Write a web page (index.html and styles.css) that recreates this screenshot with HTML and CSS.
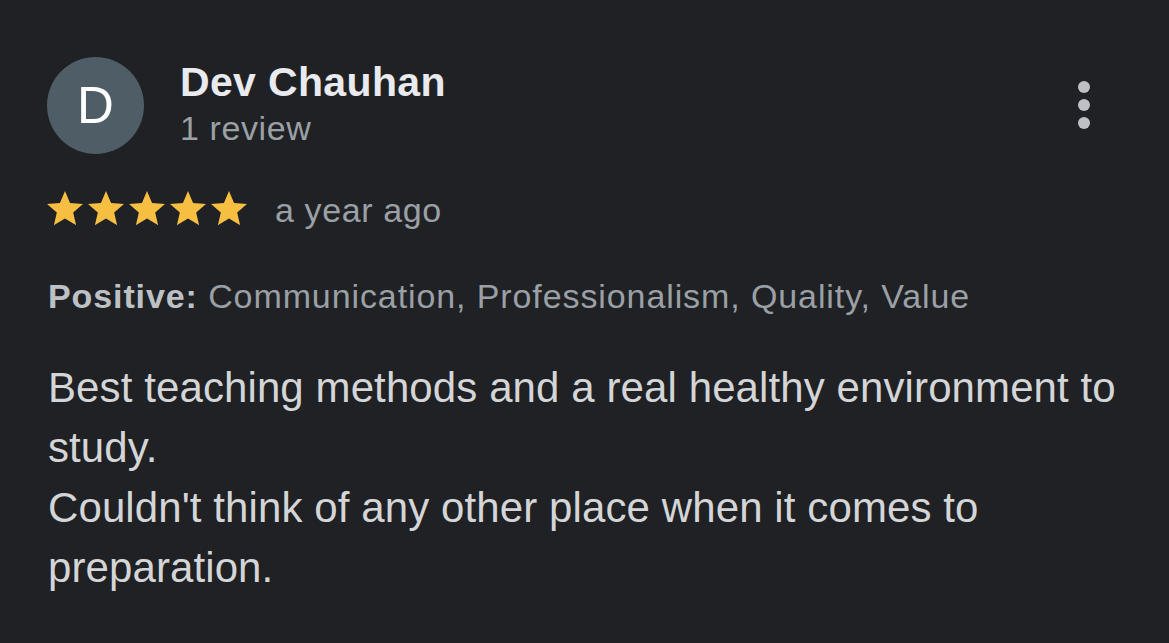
FILE: index.html
```html
<!DOCTYPE html>
<html>
<head>
<meta charset="utf-8">
<link rel="stylesheet" href="styles.css">
</head>
<body>
<div class="review">
  <div class="header">
    <div class="avatar">D</div>
    <div class="who">
      <div class="name">Dev Chauhan</div>
      <div class="count">1 review</div>
    </div>
    <div class="menu" aria-label="More">
      <span class="dot"></span><span class="dot"></span><span class="dot"></span>
    </div>
  </div>
  <div class="rating">
    <div class="stars">
      <svg class="star" viewBox="2 2 20 19"><path d="M12 17.27L18.18 21l-1.64-7.03L22 9.24l-7.19-.61L12 2 9.19 8.63 2 9.24l5.46 4.73L5.82 21z"/></svg>
      <svg class="star" viewBox="2 2 20 19"><path d="M12 17.27L18.18 21l-1.64-7.03L22 9.24l-7.19-.61L12 2 9.19 8.63 2 9.24l5.46 4.73L5.82 21z"/></svg>
      <svg class="star" viewBox="2 2 20 19"><path d="M12 17.27L18.18 21l-1.64-7.03L22 9.24l-7.19-.61L12 2 9.19 8.63 2 9.24l5.46 4.73L5.82 21z"/></svg>
      <svg class="star" viewBox="2 2 20 19"><path d="M12 17.27L18.18 21l-1.64-7.03L22 9.24l-7.19-.61L12 2 9.19 8.63 2 9.24l5.46 4.73L5.82 21z"/></svg>
      <svg class="star" viewBox="2 2 20 19"><path d="M12 17.27L18.18 21l-1.64-7.03L22 9.24l-7.19-.61L12 2 9.19 8.63 2 9.24l5.46 4.73L5.82 21z"/></svg>
    </div>
    <span class="when">a year ago</span>
  </div>
  <p class="tags"><b>Positive:</b> Communication, Professionalism, Quality, Value</p>
  <p class="text">Best teaching methods and a real healthy environment to study.<br>Couldn't think of any other place when it comes to preparation.</p>
</div>
</body>
</html>
```
FILE: styles.css
```css
html, body {
  margin: 0;
  padding: 0;
  background: #202124;
}
body {
  font-family: "Liberation Sans", Arial, sans-serif;
  width: 1169px;
  height: 643px;
  overflow: hidden;
}
.review {
  padding: 57px 48px 0 47px;
}
.header {
  display: flex;
  align-items: flex-start;
}
.avatar {
  width: 97px;
  height: 97px;
  border-radius: 50%;
  background: #4e5d66;
  color: #ffffff;
  font-size: 51px;
  line-height: 97px;
  text-align: center;
  flex: none;
}
.who {
  margin-left: 36px;
  padding-top: 1px;
  flex: 1;
}
.name {
  color: #e8eaed;
  font-weight: bold;
  font-size: 41px;
  line-height: 48px;
  letter-spacing: 0.35px;
}
.count {
  color: #9aa0a6;
  font-size: 34px;
  line-height: 40px;
  margin-top: 2px;
  letter-spacing: 0.6px;
}
.menu {
  display: flex;
  flex-direction: column;
  gap: 6px;
  margin-top: 24px;
  margin-right: 31px;
}
.dot {
  width: 12px;
  height: 12px;
  border-radius: 50%;
  background: #bdc1c6;
}
.rating {
  display: flex;
  align-items: center;
  margin-top: 37px;
  height: 34px;
}
.stars {
  display: flex;
  gap: 5px;
}
.star {
  width: 36px;
  height: 34.2px;
  fill: #f6bf41;
  display: block;
}
.when {
  color: #9aa0a6;
  font-size: 34px;
  line-height: 34px;
  margin-left: 28px;
  letter-spacing: 0.6px;
  position: relative;
  top: 2px;
}
.tags {
  margin: 51px 0 0 1px;
  color: #9aa0a6;
  font-size: 34px;
  line-height: 40px;
  letter-spacing: 0.9px;
}
.tags b {
  color: #bdc1c6;
}
.text {
  margin: 42px 0 0 1px;
  color: #d4d5d7;
  font-size: 42px;
  line-height: 60px;
  letter-spacing: 0.1px;
}
```
